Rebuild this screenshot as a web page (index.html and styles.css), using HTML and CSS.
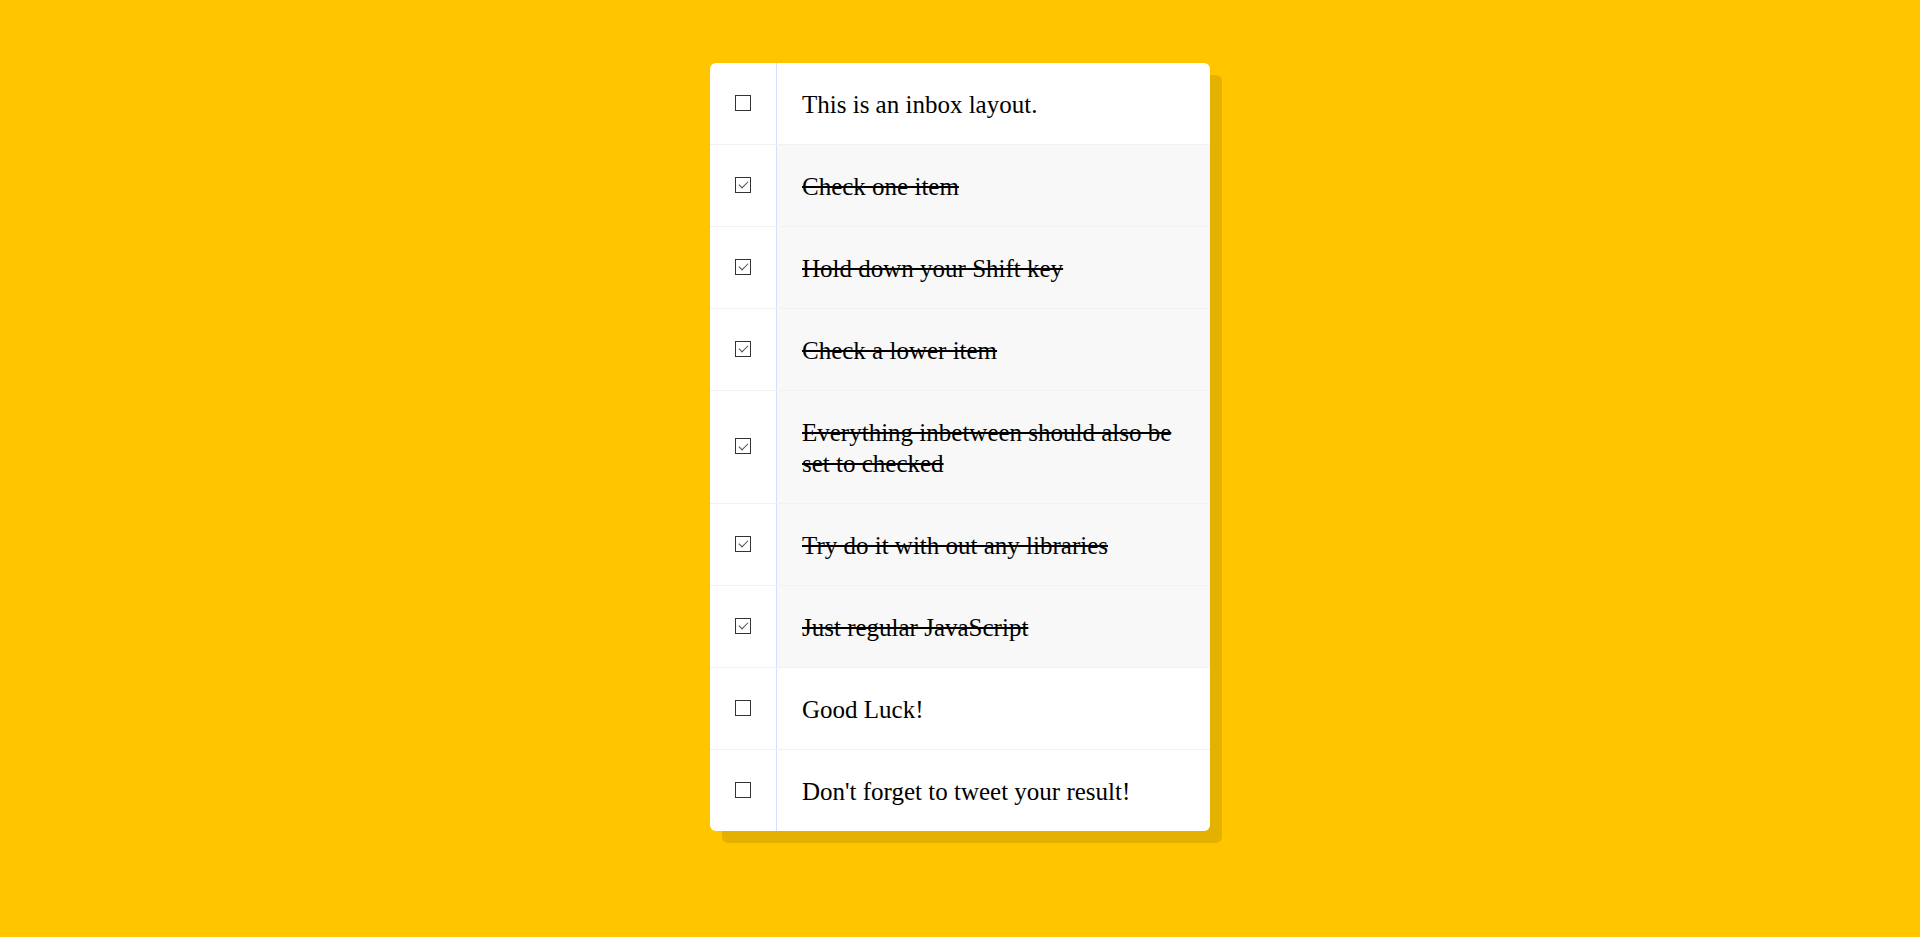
FILE: index.html
```html
<!DOCTYPE html>
<html lang="en">
<head>
<meta charset="UTF-8">
<title>Hold Shift to Check Multiple Checkboxes!</title>
<link rel="stylesheet" href="styles.css">
</head>
<body>
  <div class="inbox">
    <div class="item">
      <input type="checkbox">
      <p>This is an inbox layout.</p>
    </div>
    <div class="item">
      <input type="checkbox" checked>
      <p>Check one item</p>
    </div>
    <div class="item">
      <input type="checkbox" checked>
      <p>Hold down your Shift key</p>
    </div>
    <div class="item">
      <input type="checkbox" checked>
      <p>Check a lower item</p>
    </div>
    <div class="item">
      <input type="checkbox" checked>
      <p>Everything inbetween should also be set to checked</p>
    </div>
    <div class="item">
      <input type="checkbox" checked>
      <p>Try do it with out any libraries</p>
    </div>
    <div class="item">
      <input type="checkbox" checked>
      <p>Just regular JavaScript</p>
    </div>
    <div class="item">
      <input type="checkbox">
      <p>Good Luck!</p>
    </div>
    <div class="item">
      <input type="checkbox">
      <p>Don't forget to tweet your result!</p>
    </div>
  </div>
</body>
</html>
```

FILE: styles.css
```css
html {
  background: #ffc600;
  font-family: "Liberation Sans", sans-serif;
}

body {
  margin: 0;
  padding: 1px 0;
}

.inbox {
  width: 500px;
  margin: 62px auto;
  background: #ffffff;
  border-radius: 6px;
  box-shadow: 12px 12px 0 rgba(0, 0, 0, 0.1);
  overflow: hidden;
}

.item {
  display: flex;
  align-items: stretch;
  border-bottom: 1px solid #f1f1f1;
}

.item:last-child {
  border-bottom: 0;
}

.item input[type="checkbox"] {
  -webkit-appearance: none;
  appearance: none;
  flex: 0 0 auto;
  align-self: center;
  position: relative;
  width: 16px;
  height: 16px;
  margin: 0 25px 2px;
  border: 1px solid #333333;
  border-radius: 0;
  background: #ffffff;
  box-sizing: border-box;
}

.item input[type="checkbox"]:checked::after {
  content: "";
  position: absolute;
  left: 4.5px;
  top: 1.5px;
  width: 4px;
  height: 8px;
  border-right: 1.5px solid #4a4a4a;
  border-bottom: 1.5px solid #4a4a4a;
  transform: rotate(45deg);
}

.item p {
  flex: 1;
  margin: 0;
  padding: 26px 25px 24px;
  font-family: "Liberation Serif", "Times New Roman", serif;
  font-size: 25px;
  line-height: 31px;
  color: #000000;
  border-left: 1px solid #d1e2ff;
}

.item input:checked + p {
  background: #f8f8f8;
  text-decoration: line-through;
}
```
